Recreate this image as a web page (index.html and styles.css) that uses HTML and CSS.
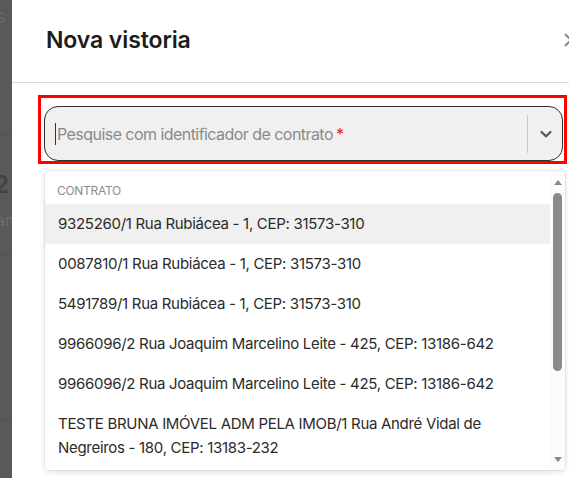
FILE: index.html
```html
<!DOCTYPE html>
<html lang="pt-BR">
<head>
<meta charset="utf-8">
<link rel="stylesheet" href="styles.css">
</head>
<body>
<div class="page">
  <aside class="backdrop">
    <div class="bg-s">s</div>
    <div class="bg-line l1"></div>
    <div class="bg-num">2</div>
    <div class="bg-an">an</div>
    <div class="bg-line l2"></div>
    <div class="bg-line l3"></div>
  </aside>
  <section class="modal">
    <header class="modal-header">
      <h1 class="title">Nova vistoria</h1>
      <span class="close">
        <svg width="16" height="16" viewBox="0 0 16 16"><path d="M2 2 L14 14 M14 2 L2 14" stroke="#8a8a8a" stroke-width="2" fill="none"/></svg>
      </span>
    </header>
    <div class="modal-body">
      <div class="highlight">
        <div class="select">
          <div class="select-value">
            <span class="caret"></span>
            <span class="placeholder">Pesquise com identificador de contrato</span><span class="req">*</span>
          </div>
          <span class="sep"></span>
          <span class="chev">
            <svg width="14" height="10" viewBox="0 0 14 10"><path d="M2.5 3 L7 7.3 L11.5 3" stroke="#555" stroke-width="2.2" fill="none" stroke-linecap="round"/></svg>
          </span>
        </div>
      </div>
      <div class="menu">
        <div class="menu-list">
          <div class="group">CONTRATO</div>
          <div class="option active">9325260/1 Rua Rubiácea - 1, CEP: 31573-310</div>
          <div class="option">0087810/1 Rua Rubiácea - 1, CEP: 31573-310</div>
          <div class="option">5491789/1 Rua Rubiácea - 1, CEP: 31573-310</div>
          <div class="option">9966096/2 Rua Joaquim Marcelino Leite - 425, CEP: 13186-642</div>
          <div class="option">9966096/2 Rua Joaquim Marcelino Leite - 425, CEP: 13186-642</div>
          <div class="option">TESTE BRUNA IMÓVEL ADM PELA IMOB/1 Rua André Vidal de Negreiros - 180, CEP: 13183-232</div>
        </div>
        <div class="scrollbar">
          <span class="arrow up"></span>
          <span class="thumb"></span>
          <span class="track-rest"></span>
          <span class="arrow down"></span>
        </div>
      </div>
    </div>
  </section>
</div>
</body>
</html>
```

FILE: styles.css
```css
* { box-sizing: border-box; }
html, body { margin: 0; padding: 0; }
body {
  width: 569px;
  height: 478px;
  overflow: hidden;
  background: #fff;
  font-family: "Inter", "Noto Sans", sans-serif;
}
.page {
  display: flex;
  width: 600px;
  height: 478px;
}
.backdrop {
  width: 12px;
  flex: none;
  background: #595959;
  position: relative;
  overflow: hidden;
  color: #6a6a6a;
  font-size: 20px;
}
.bg-s { position: absolute; left: -5px; top: 4px; font-size: 20px; color: #666; }
.bg-num { position: absolute; left: -6px; top: 170px; font-size: 24px; font-weight: 700; color: #444; }
.bg-an { position: absolute; left: -4px; top: 210px; font-size: 16px; color: #6e6e6e; }
.bg-line { position: absolute; left: 0; width: 12px; height: 1px; background: #525252; }
.bg-line.l1 { top: 134px; }
.bg-line.l2 { top: 254px; }
.bg-line.l3 { top: 420px; }

.modal {
  width: 570px;
  flex: none;
  background: #fff;
  display: flex;
  flex-direction: column;
}
.modal-header {
  height: 83px;
  border-bottom: 1px solid #d9d9d9;
  display: flex;
  align-items: center;
  justify-content: space-between;
  padding: 0 0 2px 34px;
}
.title {
  margin: 0;
  font-size: 23px;
  font-weight: 600;
  color: #1c1c1c;
  letter-spacing: -0.1px;
}
.close {
  display: flex;
  width: 16px;
  height: 16px;
  margin-right: 3px;
}
.modal-body {
  padding: 12px 0 0 26px;
}
.highlight {
  width: 529px;
  height: 69px;
  border: 3px solid #ff0000;
  padding: 8px 1px 0 3px;
}
.select {
  height: 55px;
  background: #f0f0f0;
  border: 1px solid #2e2e2e;
  border-radius: 14px;
  display: flex;
  align-items: center;
}
.select-value {
  flex: 1;
  display: flex;
  align-items: center;
  padding-left: 10px;
  font-size: 16px;
  color: #8a8a8a;
  letter-spacing: -0.55px;
}
.caret {
  width: 1px;
  height: 22px;
  background: #333;
  margin-right: 1px;
}
.req { color: #e8202a; margin-left: 3px; }
.sep {
  width: 1px;
  height: 38px;
  background: #c9c9c9;
}
.chev {
  width: 34px;
  display: flex;
  justify-content: center;
  padding-left: 1px;
}
.menu {
  margin: 7px 0 0 7px;
  width: 520px;
  height: 299px;
  background: #fff;
  border-radius: 4px;
  box-shadow: 0 0 0 1px rgba(0,0,0,0.06), 0 2px 6px rgba(0,0,0,0.12);
  display: flex;
  overflow: hidden;
}
.menu-list {
  flex: 1;
  overflow: hidden;
}
.group {
  padding: 12px 12px 5px;
  font-size: 12px;
  line-height: 16px;
  color: #8c8c8c;
  letter-spacing: -0.3px;
}
.option {
  padding: 8px 12px 8px 13px;
  font-size: 15px;
  line-height: 24px;
  color: #2b2b2b;
  letter-spacing: -0.3px;
}
.option.active { background: #f0f0f0; }
.scrollbar {
  width: 15px;
  flex: none;
  display: flex;
  flex-direction: column;
  align-items: center;
  padding: 9px 0 8px;
  background: #fcfcfc;
}
.arrow {
  width: 0;
  height: 0;
  border-left: 4px solid transparent;
  border-right: 4px solid transparent;
}
.arrow.up { border-bottom: 5px solid #888; margin-bottom: 8px; }
.arrow.down { border-top: 5px solid #888; }
.thumb {
  width: 9px;
  height: 178px;
  background: #8a8a8a;
  border-radius: 5px;
}
.track-rest { flex: 1; }
```
